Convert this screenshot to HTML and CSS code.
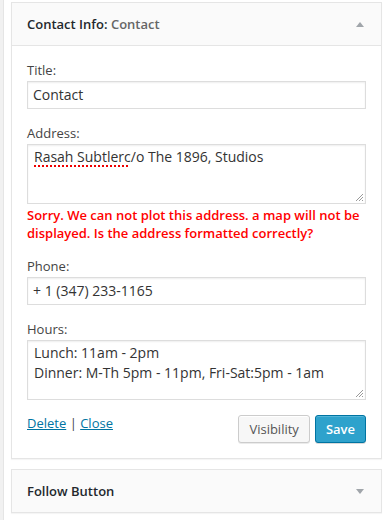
FILE: index.html
```html
<!DOCTYPE html>
<html>
<head>
<meta charset="utf-8">
<link rel="stylesheet" href="styles.css">
</head>
<body>
<div class="page">
  <div class="strip"></div>
  <div class="column">
    <div class="widget open">
      <div class="widget-top">
        <h3 class="widget-title">Contact Info: <span class="in-title">Contact</span></h3>
        <span class="arrow up"></span>
      </div>
      <div class="widget-inside">
        <div class="field">
          <label class="label">Title:</label>
          <div class="input">Contact</div>
        </div>
        <div class="field">
          <label class="label">Address:</label>
          <div class="textarea"><span class="misspelled">Rasah Subtlerc</span>/o The 1896, Studios<svg class="grip" width="10" height="10" viewBox="0 0 10 10"><path d="M9 2 L2 9 M9 5 L5 9 M9 8 L8 9" stroke="#9a9a9a" stroke-width="1" fill="none"/></svg></div>
          <p class="error">Sorry. We can not plot this address. a map will not be displayed. Is the address formatted correctly?</p>
        </div>
        <div class="field">
          <label class="label">Phone:</label>
          <div class="input">+ 1 (347) 233-1165</div>
        </div>
        <div class="field">
          <label class="label">Hours:</label>
          <div class="textarea">Lunch: 11am - 2pm<br>Dinner: M-Th 5pm - 11pm, Fri-Sat:5pm - 1am<svg class="grip" width="10" height="10" viewBox="0 0 10 10"><path d="M9 2 L2 9 M9 5 L5 9 M9 8 L8 9" stroke="#9a9a9a" stroke-width="1" fill="none"/></svg></div>
        </div>
        <div class="actions">
          <div class="links"><a href="#">Delete</a> | <a href="#">Close</a></div>
          <div class="buttons">
            <button class="button">Visibility</button>
            <button class="button primary">Save</button>
          </div>
        </div>
      </div>
    </div>
    <div class="widget">
      <div class="widget-top">
        <h3 class="widget-title">Follow Button</h3>
        <span class="arrow down"></span>
      </div>
    </div>
  </div>
</div>
</body>
</html>
```
FILE: styles.css
```css
html, body {
  margin: 0;
  padding: 0;
  background: #fff;
}
body {
  font-family: "Open Sans", "Noto Sans", sans-serif;
  font-size: 13px;
  color: #444;
}
.page {
  display: flex;
  align-items: flex-start;
}
.strip {
  width: 3px;
  height: 520px;
  background: #f1f1f1;
  border-right: 1px solid #e5e5e5;
  flex: none;
}
.column {
  margin-left: 7px;
  padding-top: 2px;
  width: 371px;
  display: flex;
  flex-direction: column;
  gap: 10px;
}
.widget {
  border: 1px solid #e5e5e5;
  background: #fff;
  box-shadow: 0 1px 1px rgba(0,0,0,0.04);
}
.widget-top {
  background: #fafafa;
  height: 42px;
  display: flex;
  align-items: center;
  justify-content: space-between;
  padding: 0 17px 0 15px;
}
.widget.open .widget-top {
  border-bottom: 1px solid #e5e5e5;
}
.widget-title {
  margin: 0;
  font-size: 13px;
  font-weight: 600;
  color: #23282d;
  line-height: 42px;
}
.in-title {
  color: #666;
  font-weight: 600;
}
.arrow {
  width: 0;
  height: 0;
  border-left: 4px solid transparent;
  border-right: 4px solid transparent;
}
.arrow.up {
  border-bottom: 5px solid #a0a5aa;
}
.arrow.down {
  border-top: 5px solid #a0a5aa;
}
.widget-inside {
  padding: 15px;
}
.field {
  margin-bottom: 15px;
}
.label {
  display: block;
  line-height: 18px;
  margin-bottom: 2px;
  color: #444;
}
.input, .textarea {
  border: 1px solid #ddd;
  box-shadow: inset 0 1px 2px rgba(0,0,0,0.07);
  background: #fff;
  color: #333;
  font-size: 14px;
}
.input {
  height: 26px;
  line-height: 26px;
  padding: 0 5px;
}
.textarea {
  position: relative;
  height: 54px;
  padding: 2px 6px;
  line-height: 20px;
}
.grip {
  position: absolute;
  right: 1px;
  bottom: 1px;
}
.misspelled {
  text-decoration: underline dotted #e00;
  text-decoration-thickness: 2px;
  text-underline-offset: 3px;
}
.error {
  margin: 2px 0 0;
  color: #f00;
  font-weight: 600;
  line-height: 18px;
}
.actions {
  display: flex;
  justify-content: space-between;
  align-items: flex-start;
  padding-top: 0;
}
.links {
  line-height: 16px;
  color: #444;
}
.links a {
  color: #0074a2;
  text-decoration: underline;
}
.buttons {
  display: flex;
  gap: 5px;
}
.button {
  font-family: inherit;
  font-size: 13px;
  height: 28px;
  line-height: 26px;
  padding: 0 10px 1px;
  border: 1px solid #ccc;
  border-radius: 3px;
  background: #f7f7f7;
  color: #555;
  box-shadow: inset 0 1px 0 #fff, 0 1px 0 rgba(0,0,0,0.08);
  margin: 0;
}
.button.primary {
  background: #2ea2cc;
  border-color: #0074a2;
  color: #fff;
  font-weight: 600;
  box-shadow: inset 0 1px 0 rgba(120,200,230,0.5), 0 1px 0 rgba(0,0,0,0.15);
}
```
